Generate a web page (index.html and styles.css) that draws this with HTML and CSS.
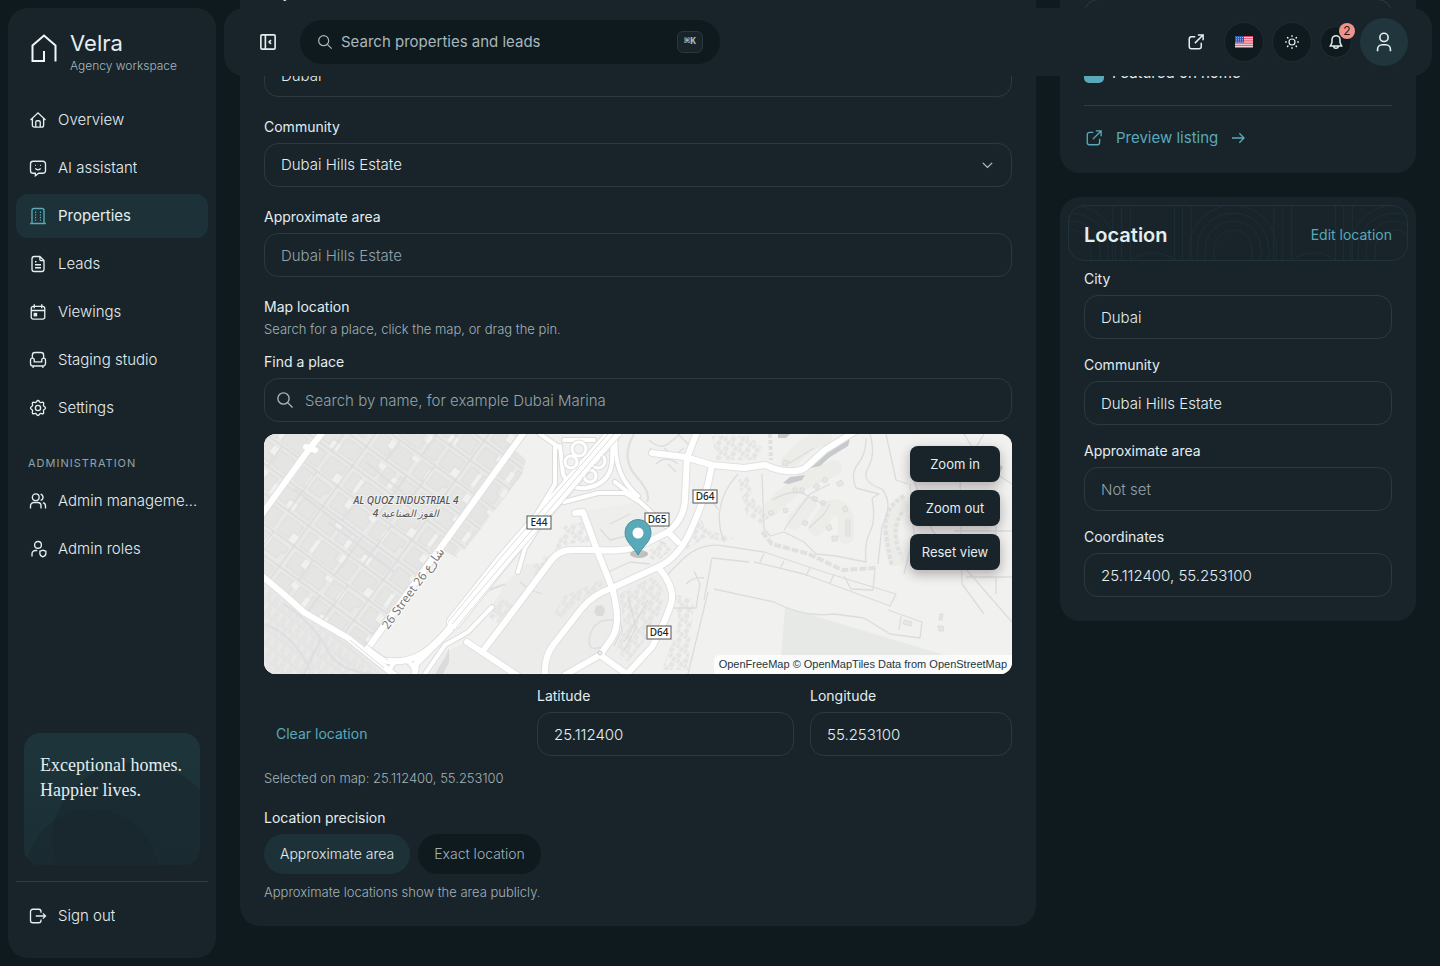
FILE: index.html
```html
<!DOCTYPE html>
<html lang="en">
<head>
<meta charset="utf-8">
<meta name="viewport" content="width=device-width, initial-scale=1">
<title>Velra – Property location</title>
<link rel="stylesheet" href="styles.css">
</head>
<body>
<div class="shell">
  <aside class="sidebar">
    <div class="brand">
      <svg class="brand-mark" viewBox="0 0 28 30" aria-hidden="true"><path d="M14 18v10H2.500V12.500L14 2.500l11.500 10V28.500"/></svg>
      <div class="brand-text">
        <span class="brand-name">Velra</span>
        <span class="brand-sub">Agency workspace</span>
      </div>
    </div>
    <nav class="nav">
      <a class="nav-item" href="#"><svg class="icon" viewBox="0 0 24 24"><path d="M2 12 12 2.500 22 12M4.500 9.800V19a2.500 2.500 0 0 0 2.500 2.500h10a2.500 2.500 0 0 0 2.500-2.500V9.800M9 21v-6a2 2 0 0 1 2-2h2a2 2 0 0 1 2 2v6"/></svg><span>Overview</span></a>
      <a class="nav-item" href="#"><svg class="icon" viewBox="0 0 24 24"><path d="M5.500 3h13A3.500 3.500 0 0 1 22 6.500v9a3.500 3.500 0 0 1-3.500 3.500H13l-4.500 3.300V19h-3A3.500 3.500 0 0 1 2 15.500v-9A3.500 3.500 0 0 1 5.500 3zM8 8.500h1M15 8.500h1M8.500 12.500c1.500 2.600 5.500 2.600 7 0"/></svg><span>AI assistant</span></a>
      <a class="nav-item is-active" href="#" aria-current="page"><svg class="icon" viewBox="0 0 24 24"><path d="M1.500 22h21M4 22V4.500A2.500 2.500 0 0 1 6.500 2h11A2.500 2.500 0 0 1 20 4.500V22M8 7h1.500M14.500 7H16M8 10.500h1.500M14.500 10.500H16M8 14h1.500M14.500 14H16M8 17.500h1.500M14.500 17.500H16"/></svg><span>Properties</span></a>
      <a class="nav-item" href="#"><svg class="icon" viewBox="0 0 24 24"><path d="M14.500 2H7a3 3 0 0 0-3 3v14a3 3 0 0 0 3 3h10a3 3 0 0 0 3-3V7.500zM14.500 2v3.500a2 2 0 0 0 2 2H20M8 9h2M8 13h8M8 17h8"/></svg><span>Leads</span></a>
      <a class="nav-item" href="#"><svg class="icon" viewBox="0 0 24 24"><path d="M5.500 4.500h13A2.500 2.500 0 0 1 21 7v12a2.500 2.500 0 0 1-2.500 2.500h-13A2.500 2.500 0 0 1 3 19V7a2.500 2.500 0 0 1 2.500-2.500zM3 10h18M7 1.500V7M17 1.500V7"/><rect x="7" y="14" width="3" height="3" fill="currentColor"/></svg><span>Viewings</span></a>
      <a class="nav-item" href="#"><svg class="icon" viewBox="0 0 24 24"><path d="M4.500 9V5.500A3.500 3.500 0 0 1 8 2h8a3.500 3.500 0 0 1 3.500 3.500V9M7 14.500V12a2.500 2.500 0 1 0-5 0v4.500A3.500 3.500 0 0 0 5.500 20h13a3.500 3.500 0 0 0 3.500-3.500V12a2.500 2.500 0 1 0-5 0v2.500zM5.500 20v2.500M18.500 20v2.500"/></svg><span>Staging studio</span></a>
      <a class="nav-item" href="#"><svg class="icon" viewBox="0 0 24 24"><circle cx="12" cy="12" r="3.500"/><path d="M12 2c1.800 0 1.900 2.200 3.100 2.700S18 3.600 19.200 4.800s-.4 2.900.1 4.100S22 10.200 22 12s-2.200 1.900-2.700 3.100 1.100 2.900-.1 4.100-2.900-.4-4.100.1S13.800 22 12 22s-1.900-2.200-3.100-2.700-2.900 1.100-4.100-.1.400-2.900-.1-4.100S2 13.800 2 12s2.200-1.900 2.700-3.100-1.100-2.900.1-4.100 2.900.4 4.100-.1S10.200 2 12 2z"/></svg><span>Settings</span></a>
      <p class="nav-heading">ADMINISTRATION</p>
      <a class="nav-item" href="#"><svg class="icon" viewBox="0 0 24 24"><circle cx="9" cy="7" r="4.500"/><path d="M2 22v-3.500A4.500 4.500 0 0 1 6.500 14h5a4.500 4.500 0 0 1 4.500 4.500V22M15.500 2.700a4.500 4.500 0 0 1 0 8.600M18.500 14.200A4.500 4.500 0 0 1 22 18.500V22"/></svg><span>Admin manageme…</span></a>
      <a class="nav-item" href="#"><svg class="icon" viewBox="0 0 24 24"><circle cx="12" cy="6.500" r="4.500"/><path d="M4 22v-3.500A4.500 4.500 0 0 1 8.500 14H11M18.500 13.500l4 1.500v3c0 2.500-2 3.800-4 4.500-2-.7-4-2-4-4.500v-3z"/></svg><span>Admin roles</span></a>
    </nav>
    <div class="promo">
      <svg class="promo-art" viewBox="0 0 176 132" preserveAspectRatio="xMidYMid slice" aria-hidden="true"><ellipse cx="112" cy="106" rx="84" ry="76"/><circle cx="68" cy="143" r="67"/></svg>
      <p class="promo-text">Exceptional homes.<br>Happier lives.</p>
    </div>
    <div class="sidebar-foot">
      <button class="nav-item" type="button"><svg class="icon" viewBox="0 0 24 24"><path d="M16 7.500V6a3 3 0 0 0-3-3H5a3 3 0 0 0-3 3v12a3 3 0 0 0 3 3h8a3 3 0 0 0 3-3v-1.500M9 12h13M18.500 8.500 22 12l-3.500 3.500"/></svg><span>Sign out</span></button>
    </div>
  </aside>

  <header class="topbar">
    <button class="icon-btn plain" type="button" aria-label="Collapse sidebar"><svg class="icon" viewBox="0 0 24 24"><path stroke-width="2.200" d="M4 2.500h16A1.500 1.500 0 0 1 21.500 4v16a1.500 1.500 0 0 1-1.500 1.500H4A1.500 1.500 0 0 1 2.500 20V4A1.500 1.500 0 0 1 4 2.500zM8.500 2.500v19M16 9.500 13.500 12l2.500 2.500"/></svg></button>
    <label class="search">
      <svg class="icon icon-sm" viewBox="0 0 24 24"><circle cx="10" cy="10" r="7.500"/><path d="m15.500 15.500 6.500 6.500"/></svg>
      <input class="search-input" type="search" aria-label="Search properties and leads" placeholder="Search properties and leads">
      <kbd class="kbd">⌘K</kbd>
    </label>
    <div class="actions">
      <a class="icon-btn plain" href="#" aria-label="Open site"><svg class="icon" viewBox="0 0 24 24"><path stroke-width="2" d="M11 5H6a3 3 0 0 0-3 3v10a3 3 0 0 0 3 3h10a3 3 0 0 0 3-3v-5M10.500 13.500 21 3M14.500 2.500H21.500V9.500"/></svg></a>
      <button class="icon-btn round" type="button" aria-label="Language: English">
        <svg class="flag" viewBox="0 0 18 12"><rect width="18" height="12" fill="#f4f5f7"/><path d="M0 .5h18M0 2.300h18M0 4.200h18M0 6h18M0 7.800h18M0 9.700h18M0 11.500h18" stroke="#e5405c"/><rect width="9" height="6.500" fill="#3157b5"/><path d="M1 1.500h8M1 3.300h8M1 5.100h8" stroke="#dfe6f6" stroke-width=".6" stroke-dasharray="1 1"/></svg>
      </button>
      <button class="icon-btn round" type="button" aria-label="Theme"><svg class="icon icon-sm" viewBox="0 0 24 24"><circle cx="12" cy="12" r="4.500"/><path stroke-linecap="round" stroke-width="2.200" d="M12 2.500v.8M12 20.700v.8M2.500 12h.8M20.700 12h.8M5.300 5.300l.5.500M18.200 18.200l.5.500M5.300 18.700l.5-.5M18.200 5.800l.5-.5"/></svg></button>
      <button class="icon-btn round small" type="button" aria-label="Notifications, 2 unread"><svg class="icon icon-sm" viewBox="0 0 24 24"><path stroke-width="2.200" d="M12 2.500a6 6 0 0 0-6 6V13l-2.500 5h17L18 13V8.500a6 6 0 0 0-6-6zM8.500 18c0 4.500 7 4.500 7 0"/></svg><span class="badge">2</span></button>
      <button class="icon-btn avatar" type="button" aria-label="Account"><svg class="icon icon-lg" viewBox="0 0 24 24"><circle cx="12" cy="7" r="4.500"/><path d="M5 22v-2a5 5 0 0 1 5-5h4a5 5 0 0 1 5 5v2"/></svg></button>
    </div>
  </header>

  <main class="content">
    <form class="card form-card">
      <p class="label">City</p>
      <div class="field gap-top">
        <label class="label" for="f-city">City</label>
        <input class="input" id="f-city" value="Dubai">
      </div>
      <div class="field">
        <label class="label" for="f-comm">Community</label>
        <div class="select-wrap">
          <select class="input" id="f-comm"><option>Dubai Hills Estate</option></select>
          <svg class="icon icon-sm chevron" viewBox="0 0 24 24"><path d="m4.500 8.500 7.500 7.500 7.500-7.500"/></svg>
        </div>
      </div>
      <div class="field">
        <label class="label" for="f-area">Approximate area</label>
        <input class="input" id="f-area" placeholder="Dubai Hills Estate">
      </div>
      <section class="map-section">
        <h3 class="label">Map location</h3>
        <p class="help">Search for a place, click the map, or drag the pin.</p>
        <div class="field find">
          <label class="label" for="f-find">Find a place</label>
          <div class="select-wrap">
            <svg class="icon lens" viewBox="0 0 24 24"><circle cx="10" cy="10" r="7.500"/><path d="m15.500 15.500 6.500 6.500"/></svg>
            <input class="input with-icon" id="f-find" placeholder="Search by name, for example Dubai Marina">
          </div>
        </div>
        <div class="map">
          <svg class="map-art" viewBox="0 0 748 240" preserveAspectRatio="xMidYMid slice" role="img" aria-label="Map of Al Quoz and Dubai Hills">
            <defs>
              <pattern id="blocks" width="92" height="74" patternUnits="userSpaceOnUse" patternTransform="rotate(36)">
                <rect width="92" height="74" fill="#e9eae8"/>
                <g fill="#e5e6e3" stroke="#d9dada" stroke-width=".7">
                  <path d="M3 3h12v9h5v8H3zM24 3h17v5h4v12H24zM51 3h12v17H51zM68 4h19v7h-4v8H68zM3 28h15v6h4v10H3zM27 28h11v16H27zM43 28h21v9h-5v7H43zM70 28h17v16H70zM3 52h10v18H3zM18 52h21v8h4v10H18zM49 52h13v18H49zM67 52h20v10h-6v8H67z"/>
                </g>
                <g fill="#f1f1f0"><path d="M15 3h6v8h-6zM42 3h7v4h-7zM63 5h4v12h-4zM19 28h7v5h-7zM38 33h5v11h-5zM60 38h9v7h-9zM13 54h4v14h-4zM43 51h6v8h-6zM82 63h8v8h-8z"/></g>
                <path d="M0 24h92M0 48h92M0 73h92M22 0v24M48 24v50M65 0v48M90 0v74" fill="none" stroke="#dcdcde" stroke-width="1.500"/>
              </pattern>
              <pattern id="houses" width="12" height="9" patternUnits="userSpaceOnUse" patternTransform="rotate(-52)">
                <path d="M1 1h4v3H1zM7 2h4v4H7zM2 6h4v2H2z" fill="#e6e7e5" stroke="#dadbda" stroke-width=".5"/>
              </pattern>
            </defs>
            <rect width="748" height="240" fill="#f1f1f0"/>
            <path fill="url(#blocks)" d="M0 0H261L200 85L104 214L84 204L41 179L0 144z"/>
            <path fill="#e9eae8" d="M0 146L41 181L84 206L128 240H0z"/>
            <path fill="url(#houses)" d="M0 150L41 184L84 210L116 240H0z"/>
            <path fill="url(#blocks)" d="M251 16L262 26L258 40L216 96L194 124L178 116z"/>
            <path fill="#ececea" d="M228 172L241 150L262 130L284 128L241 188L218 218L203 208L181 218L166 240H251L218 218L241 188L291 124L308 116H331L348 154L353 181L348 204L336 221L301 239H251z"/>
            <path fill="#ececea" d="M241 188L291 124L308 116H331L348 154L353 181L348 204L336 221L301 239H251L218 218z"/>
            <path fill="#eeeeec" d="M348 154L394 133L408 154L406 178L388 213L364 239L336 221L348 204L353 181zM311 79L374 68L404 98L374 114L333 116z"/>
            <path fill="url(#houses)" d="M355 160L390 142L400 158L397 176L380 208L364 228L352 216L360 190zM300 92L318 88L326 108L305 110L290 118zM268 134L282 120L292 124L274 148zM412 160L430 166L424 236H398L414 190zM300 162L336 146L340 152L310 170L298 184L290 180zM380 120L398 108L408 116L392 128zM448 2H486L498 14L492 26H452zM474 46L484 42L490 66L506 84L496 90L482 80zM436 84L444 96L470 104L464 108L440 104L420 118L416 112zM222 180L240 164L250 172L232 190z"/>
            <path fill="#e6e9e6" d="M521 173L690 224L700 240H516z"/>
            <g fill="none" stroke="#ecede9" stroke-width="16" stroke-linecap="round"><path d="M524 30Q540 8 560 4M508 74L518 64L535 50L570 34M530 88L545 70M552 94L565 75Q584 66 582 102M632 124Q620 90 636 72"/></g>
            <g fill="#e6e7e5" stroke="#d6d7d7" stroke-width=".7"><path d="M520 26l5 1-2 5-4-1zM529 54h4v5h-4zM536 54h4v5h-4zM504 78l4-2 2 4-4 2zM519 75l4-1 1 4-4 1zM540 86l4 2-2 4-4-2zM552 49l4 3-3 4-4-3zM560 43l4 2-2 4-4-2zM572 49l5-3 3 4-5 3zM549 62l5 2-2 4-4-2zM558 66l4 2-2 4-4-2zM562 93l4-3 2 5-4 2zM568 102l6 0-1 5-5 0zM578 74l4-2 2 5-4 1zM582 86h4v16h-4zM676 180l3 0-1 6-3 0zM674 192l5 0 1 5-5 0zM640 186l8 2-1 4-8-2z"/></g>
            <path fill="none" stroke="#e0e1df" stroke-width="4" stroke-dasharray="7 2" d="M498 98L508 110L545 120L578 136L612 134"/>
            <path fill="none" stroke="#e0e1df" stroke-width="4" stroke-dasharray="4 2" d="M506 0L507 26M640 62Q618 74 622 100T628 132M638 78Q626 96 636 120"/>
            <g fill="none" stroke="#dcdcde" stroke-width="1.300" stroke-linejoin="round">
              <path d="M498 40L500 95L506 102L520 98L540 108L552 120L572 122L602 128Q600 110 606 98T608 64L615 60L592 54Q586 40 594 30T602 4M606 0Q612 20 604 34T618 55Q630 70 618 92L614 130M622 0L632 46L644 50"/>
              <path d="M400 144L420 124Q438 108 460 112L500 118L560 138L612 154L632 160L626 172L540 140L490 128M440 166L448 124L485 128M450 155L510 168Q540 184 570 180L600 184L626 200L656 204L658 188L624 176M444 158L424 240"/>
              <path d="M430 137L436 150L432 174H410M635 196L637 182M422 150Q430 142 440 144"/>
              <path d="M450 30Q440 60 454 75M474 40Q446 70 460 108M580 142L587 155L609 156L611 134M640 140L650 100L646 50M668 96L748 188M648 40L668 96M700 0Q720 34 748 50M720 0L696 40L698 150L720 180M690 97H748M702 143H748M732 92V130M732 143V160"/>
              <path d="M508 66Q530 54 540 60T560 70M520 96L534 76L546 60L566 50M524 30L550 14M545 94L560 80L566 70M500 120L496 128M520 127L516 135M546 134L542 142M570 140L566 149M256 148L266 156L278 160M336 95L346 106L362 102M346 90L366 80M340 140L366 128L386 130M376 94L388 104L402 110M352 160L358 196L350 212M364 162L372 194L360 216M360 208L384 166"/>
              <path d="M350 186Q330 184 326 202T340 212M414 0L430 16M385 6Q396 16 404 10L416 0M392 30Q402 20 414 30M386 14L396 24M400 14L410 22L420 14M404 30L412 38"/>
            </g>
            <g fill="none" stroke="#dedfe0" stroke-width="2.200"><path d="M370 0Q356 24 372 42T383 68M20 170Q50 190 62 214T110 240M40 240L56 206M0 190Q30 200 46 236M200 178L220 158L241 150M64 88L130 138M102 28L150 68M30 55L92 102"/></g>
            <path fill="#c6cacc" d="M543 35L550 25L562 18L570 12L586 5L584 12L566 23L556 32zM519 49L526 43L541 41L538 46L525 50zM514 0h12l-4 4h-8zM735 30l4 3-3 6z"/>
            <path fill="#d9dcdb" d="M332 172l6-1 3 5-2 6-6 0-3-4zM182 222l3-8 0 14-6 12h-8z"/>
            <g fill="none" stroke="#e0e0e1" stroke-linejoin="round" stroke-linecap="round">
              <path stroke-width="16" d="M351 -2L241 124L190 188"/>
              <path stroke-width="8" d="M192 186Q170 214 154 222T118 226L104 216M186 196L152 230L150 244"/>
              <path stroke-width="8" d="M261 -3L104 214M59 -2L46 14L-2 80M-2 142L16 157L41 179L84 204L118 231L134 244M218 218L254 242M203 208L218 218L241 188L286 128Q294 116 308 116L331 116Q360 118 376 112L404 98Q421 84 421 64L423 24L433 -2M404 98L414 108"/>
              <path stroke-width="8" d="M311 79L319 78L333 116L348 154Q358 188 348 204L336 221L301 241M336 221L364 241M281 241Q280 222 290 210L318 174Q330 160 348 154L394 133Q414 124 426 98T444 50L448 31M394 133Q412 154 407 170T388 213L362 241M388 19L421 23L448 31L480 34L501 31Q526 42 541 34L561 16L590 -2"/>
            </g>
            <g fill="none" stroke="#dcdcdd" stroke-width="6" stroke-linecap="round">
              <path d="M296 12L299 40Q306 56 322 54Q346 50 348 28L349 -2M291 11L291 50L274 78M351 48L374 66L402 92M300 68L334 59L361 59L376 68M278 88L261 114L254 138M228 173L204 198L181 211L161 240"/>
              <circle cx="138" cy="238" r="12"/>
              <path d="M276 0L296 14M352 2Q348 40 374 62M300 6H330"/>
            </g>
            <g fill="none" stroke="#fff" stroke-linejoin="round" stroke-linecap="round">
              <path stroke-width="14" d="M351 -2L241 124L190 188"/>
              <path stroke-width="6" d="M192 186Q170 214 154 222T118 226L104 216M186 196L152 230L150 244"/>
              <path stroke-width="6" d="M261 -3L104 214M59 -2L46 14L-2 80M42 13l9 3"/>
              <path stroke-width="6" d="M-2 142L16 157L41 179L84 204L118 231L134 244M203 208L218 218L254 242M218 218L241 188L286 128Q294 116 308 116L331 116Q360 118 376 112L404 98Q421 84 421 64L423 24L433 -2M404 98L414 108"/>
              <path stroke-width="6" d="M311 79L319 78L333 116L348 154Q358 188 348 204L336 221L301 241M336 221L364 241M281 241Q280 222 290 210L318 174Q330 160 348 154L394 133Q414 124 426 98T444 50L448 31M394 133Q412 154 407 170T388 213L362 241M388 19L421 23L448 31L480 34L501 31Q526 42 541 34L561 16L590 -2"/>
            </g>
            <g fill="none" stroke="#fff" stroke-width="4" stroke-linecap="round">
              <path d="M296 12L299 40Q306 56 322 54Q346 50 348 28L349 -2M291 11L291 50L274 78M351 48L374 66L402 92M300 68L334 59L361 59L376 68M278 88L261 114L254 138M228 173L204 198L181 211L161 240"/>
              <circle cx="138" cy="238" r="12"/>
              <path d="M276 0L296 14M352 2Q348 40 374 62M300 6H330"/>
            </g>
            <g fill="none" stroke="#dedede" stroke-width="5"><circle cx="315" cy="15" r="7"/><circle cx="334" cy="27" r="7"/><circle cx="307" cy="28" r="6"/><circle cx="326" cy="42" r="6"/></g>
            <g fill="none" stroke="#fff" stroke-width="3"><circle cx="315" cy="15" r="7"/><circle cx="334" cy="27" r="7"/><circle cx="307" cy="28" r="6"/><circle cx="326" cy="42" r="6"/></g>
            <path stroke="#fff" stroke-width="9" d="M343 8L296 62"/>
            <g fill="none" stroke="#dcdcdd" stroke-width="1"><path d="M344 0L238 122L184 188M356 2L250 124L192 194M350 0L244 124L188 190M86 206L120 234M92 202L124 226"/></g>
            <circle cx="336" cy="219" r="2" fill="#f1f1f0" stroke="#ccc"/>
            <g class="place">
              <text x="142" y="70" text-anchor="middle">AL QUOZ INDUSTRIAL 4</text>
              <text x="142" y="83" text-anchor="middle" direction="rtl">القوز الصناعية 4</text>
            </g>
            <text class="street" transform="translate(124 196) rotate(-54)">26 Street 26 شارع</text>
            <g class="shield">
              <rect x="263" y="82" width="24" height="13"/><text x="275" y="92">E44</text>
              <rect x="429" y="56" width="24" height="13"/><text x="441" y="66">D64</text>
              <rect x="381" y="79" width="24" height="13"/><text x="393" y="89">D65</text>
              <rect x="383" y="192" width="24" height="13"/><text x="395" y="202">D64</text>
            </g>
            <ellipse cx="375" cy="120" rx="9" ry="4" fill="#000" opacity=".2"/>
            <path d="M374 121C370 113 361 108 361 98.500a13 13 0 0 1 26 0C387 108 378 113 374 121z" fill="#5aa9b8" stroke="#4793a2"/>
            <circle cx="374" cy="99" r="5.500" fill="#fff"/>
          </svg>
          <div class="map-controls">
            <button class="map-btn" type="button">Zoom in</button>
            <button class="map-btn" type="button">Zoom out</button>
            <button class="map-btn" type="button">Reset view</button>
          </div>
          <p class="map-credit"><a href="#">OpenFreeMap</a> <a href="#">© OpenMapTiles</a> Data from <a href="#">OpenStreetMap</a></p>
        </div>
        <div class="coords">
          <button class="text-btn" type="button">Clear location</button>
          <div class="field"><label class="label" for="f-lat">Latitude</label><input class="input" id="f-lat" value="25.112400"></div>
          <div class="field"><label class="label" for="f-lng">Longitude</label><input class="input" id="f-lng" value="55.253100"></div>
        </div>
        <p class="help spaced">Selected on map: 25.112400, 55.253100</p>
      </section>
      <section class="precision">
        <h3 class="label">Location precision</h3>
        <div class="chips">
          <button class="chip is-on" type="button" aria-pressed="true">Approximate area</button>
          <button class="chip" type="button" aria-pressed="false">Exact location</button>
        </div>
        <p class="help">Approximate locations show the area publicly.</p>
      </section>
    </form>

    <div class="side">
      <section class="card publish-card">
        <input class="input" aria-label="Status">
        <label class="check"><input class="check-box" type="checkbox" checked><span>Featured on home</span></label>
        <a class="preview" href="#">
          <svg class="icon" viewBox="0 0 24 24"><path d="M11 4.500H6a3 3 0 0 0-3 3V18a3 3 0 0 0 3 3h10.500a3 3 0 0 0 3-3v-5M10.500 13.500 21 3M14.500 2.500H21.500V9.500"/></svg>
          <span>Preview listing</span>
          <svg class="icon icon-sm" viewBox="0 0 24 24"><path stroke-width="2" d="M3 12h18M14 5l7 7-7 7"/></svg>
        </a>
      </section>
      <section class="card location-card">
        <div class="location-head">
          <svg class="arches" viewBox="0 0 340 56" preserveAspectRatio="xMidYMid slice" aria-hidden="true">
            <defs>
              <g id="arch"><path d="M-44 56V44a44 44 0 0 1 88 0v12M-36 56V44a36 36 0 0 1 72 0v12M-28 56V44a28 28 0 0 1 56 0v12M-19 56V44a19 19 0 0 1 38 0v12"/></g>
              <g id="bars"><path d="M-40 0v56M-31 0v56M-22 0v56M22 0v56M30 0v56M39 0v56M-24 56q24-16 48 0"/></g>
            </defs>
            <use href="#arch" x="3"/><use href="#bars" x="84"/><use href="#arch" x="165"/><use href="#bars" x="246"/><use href="#arch" x="327"/>
          </svg>
          <h2 class="location-title">Location</h2>
          <a class="edit-link" href="#">Edit location</a>
        </div>
        <div class="side-fields">
          <div class="field"><label class="label" for="s-city">City</label><input class="input" id="s-city" value="Dubai" readonly></div>
          <div class="field"><label class="label" for="s-comm">Community</label><input class="input" id="s-comm" value="Dubai Hills Estate" readonly></div>
          <div class="field"><label class="label" for="s-area">Approximate area</label><input class="input" id="s-area" placeholder="Not set" readonly></div>
          <div class="field"><label class="label" for="s-coord">Coordinates</label><input class="input" id="s-coord" value="25.112400, 55.253100" readonly></div>
        </div>
      </section>
    </div>
  </main>
</div>
</body>
</html>
```

FILE: styles.css
```css
:root {
  --page: #0f1a1f;
  --panel: #18242a;
  --active: #1c3238;
  --line: #2b3a40;
  --text: #e4edf0;
  --muted: #93a3a9;
  --teal: #5aa9b8;
}

* { box-sizing: border-box; }

body {
  margin: 0;
  background: var(--page);
  color: var(--text);
  font: 400 15px/20px Inter, "Noto Sans", sans-serif;
}

p, h2, h3 { margin: 0; }
a { color: inherit; text-decoration: none; }
button, input, select { font: inherit; color: inherit; }
button { border: 0; background: none; cursor: pointer; }

.shell {
  display: grid;
  grid-template-columns: 208px minmax(0, 1fr);
  gap: 24px;
  padding: 0 24px 0 8px;
}

.icon {
  flex: none;
  width: 18px;
  height: 18px;
  fill: none;
  stroke: currentColor;
  stroke-width: 1.8;
}
.icon-sm { width: 16px; height: 16px; }
.icon-lg { width: 22px; height: 22px; }

/* Sidebar */
.sidebar {
  position: sticky;
  top: 8px;
  height: calc(100vh - 16px);
  margin: 8px 0;
  padding: 21px 8px 20px;
  display: flex;
  flex-direction: column;
  background: var(--panel);
  border-radius: 20px;
}
.brand { display: flex; gap: 12px; padding: 0 14px; margin-bottom: 23px; }
.brand-mark { width: 28px; height: 30px; margin-top: 4px; fill: none; stroke: #f2f6f7; stroke-width: 2; }
.brand-text { display: flex; flex-direction: column; }
.brand-name { font-size: 22px; line-height: 28px; }
.brand-sub { font-size: 12px; line-height: 18px; font-weight: 300; color: #a9b7bc; }
.nav { display: flex; flex-direction: column; gap: 4px; }
.nav-item {
  display: flex;
  align-items: center;
  gap: 11px;
  width: 100%;
  height: 44px;
  padding: 0 8px 0 13px;
  border-radius: 12px;
  font-weight: 300;
  text-align: left;
}
.nav-item span { overflow: hidden; text-overflow: ellipsis; white-space: nowrap; }
.nav-item.is-active { background: var(--active); font-weight: 400; }
.nav-item.is-active .icon { color: var(--teal); }
.nav-heading {
  padding: 19px 12px 2px;
  font-size: 11px;
  line-height: 20px;
  letter-spacing: 1px;
  color: var(--muted);
}
.promo {
  position: relative;
  height: 132px;
  margin: auto 8px 16px;
  padding: 20px 0 0 16px;
  overflow: hidden;
  border-radius: 16px;
  background: linear-gradient(#1d353a, #1b2f35);
}
.promo-art { position: absolute; inset: 0; width: 100%; height: 100%; fill: #18262c; fill-opacity: .5; }
.promo-text { position: relative; font: 400 18px/25px "Liberation Serif", serif; white-space: nowrap; }
.sidebar-foot { border-top: 1px solid #2a3f47; padding-top: 12px; }

/* Top bar */
.topbar {
  position: fixed;
  z-index: 2;
  top: 8px;
  left: 224px;
  right: 8px;
  height: 68px;
  padding: 0 24px;
  display: flex;
  align-items: center;
  gap: 12px;
  background: var(--panel);
  border-radius: 20px;
}
.icon-btn {
  position: relative;
  flex: none;
  display: grid;
  place-items: center;
  width: 40px;
  height: 40px;
  padding: 0;
  border-radius: 50%;
}
.round { background: var(--page); border: 1px solid #1f2d33; }
.small { width: 32px; height: 32px; }
.avatar { width: 48px; height: 48px; background: #21353c; }
.flag { width: 18px; height: 12px; }
.badge {
  position: absolute;
  top: -4px;
  right: -4px;
  width: 16px;
  height: 16px;
  border-radius: 50%;
  background: #ee948b;
  color: #26181a;
  font-size: 12px;
  line-height: 16px;
  text-align: center;
}
.search {
  display: flex;
  align-items: center;
  gap: 8px;
  flex: 0 1 420px;
  height: 44px;
  padding: 0 17px;
  border-radius: 22px;
  background: var(--page);
  color: #a9b7bc;
}
.search-input {
  flex: 1;
  min-width: 0;
  padding: 0;
  border: 0;
  outline: 0;
  background: none;
}
.search-input::placeholder { color: #a9b7bc; }
.kbd {
  width: 26px;
  height: 22px;
  border: 1px solid #2a373d;
  border-radius: 6px;
  background: var(--panel);
  font: 700 10px/20px "Liberation Mono", "DejaVu Sans Mono", monospace;
  text-align: center;
}
.actions { display: flex; align-items: center; gap: 8px; margin-left: auto; }

/* Content is scrolled a little way below the top bar */
.content {
  display: grid;
  grid-template-columns: minmax(0, 1fr) 356px;
  gap: 24px;
  align-items: start;
  margin-top: -41px;
  padding-bottom: 40px;
}
.card { background: var(--panel); border-radius: 20px; }
.form-card { padding: 24px; display: flex; flex-direction: column; gap: 20px; }
.gap-top { margin-top: 4px; }
.field { display: flex; flex-direction: column; gap: 6px; min-width: 0; }
.label { font-size: 14px; line-height: 20px; font-weight: 400; }
.input {
  width: 100%;
  height: 44px;
  padding: 0 16px;
  border: 1px solid var(--line);
  border-radius: 14px;
  outline: 0;
  background: transparent;
  font-weight: 300;
  appearance: none;
}
.input::placeholder { color: var(--muted); opacity: 1; }
.select-wrap { position: relative; }
.chevron { position: absolute; right: 17px; top: 14px; width: 15px; pointer-events: none; color: #b9c6cb; }
.lens { position: absolute; left: 12px; top: 13px; color: #a9b7bc; }
.with-icon { padding-left: 40px; }
.help { font-size: 13px; line-height: 20px; font-weight: 300; color: #a3b2b8; }
.map-section .help { margin-top: 2px; }
.find { margin-top: 13px; }

/* Map */
.map {
  position: relative;
  height: 240px;
  margin-top: 12px;
  overflow: hidden;
  border-radius: 12px;
  background: #f1f1f0;
}
.map-art { display: block; width: 100%; height: 100%; }
.place text {
  font: italic 500 10px "Noto Sans", "DejaVu Sans", sans-serif;
  fill: #555;
  stroke: #f1f1f0;
  stroke-width: 2px;
  paint-order: stroke;
}
.street {
  font: 12px "Noto Sans", "DejaVu Sans", sans-serif;
  fill: #777;
  stroke: #fff;
  stroke-width: 2px;
  paint-order: stroke;
}
.shield rect { fill: #fff; stroke: #555; }
.shield text { font: 500 10px "Noto Sans", sans-serif; fill: #222; text-anchor: middle; }
.map-controls { position: absolute; top: 12px; right: 12px; display: grid; gap: 8px; }
.map-btn {
  width: 90px;
  height: 36px;
  padding: 0;
  border-radius: 8px;
  background: var(--panel);
  font-size: 13px;
  box-shadow: 0 4px 12px rgba(20, 10, 10, .3);
}
.map-credit {
  position: absolute;
  right: 0;
  bottom: 0;
  padding: 0 5px;
  border-top-left-radius: 6px;
  background: rgba(255, 255, 255, .75);
  color: #25363e;
  font: 11px/19px "Liberation Sans", sans-serif;
}
.coords {
  display: grid;
  grid-template-columns: 257fr 257fr 202fr;
  gap: 16px;
  align-items: end;
  margin-top: 12px;
}
.text-btn {
  justify-self: start;
  height: 44px;
  padding: 0 12px;
  color: var(--teal);
  font-size: 14px;
}
.map-section .spaced { margin-top: 12px; }
.chips { display: flex; gap: 8px; margin: 6px 0 8px; }
.chip {
  height: 40px;
  padding: 0 16px;
  border-radius: 20px;
  background: var(--page);
  color: #a3b2b8;
  font-size: 14px;
  font-weight: 300;
}
.chip.is-on { background: var(--active); color: var(--text); }

/* Right column */
.side { display: grid; gap: 24px; }
.publish-card { display: grid; padding: 40px 24px 23px; }
.check { display: flex; align-items: center; gap: 8px; height: 20px; margin: 20px 0 22px; }
.check-box {
  appearance: none;
  width: 20px;
  height: 20px;
  margin: 0;
  border-radius: 5px;
  background: var(--teal);
}
.preview {
  display: flex;
  align-items: center;
  gap: 12px;
  padding: 20px 0 0 1px;
  border-top: 1px solid #2e3d43;
  color: var(--teal);
  line-height: 24px;
}
.preview .icon:first-child { margin-right: 1px; }
.location-card { padding: 8px 8px 24px; }
.location-head {
  position: relative;
  display: flex;
  align-items: center;
  justify-content: space-between;
  height: 56px;
  padding: 4px 15px 0;
  border: 1px solid #20333a;
  border-radius: 16px;
  overflow: hidden;
}
.arches { position: absolute; inset: 0; width: 100%; height: 100%; fill: none; stroke: #1d2e34; }
.location-title { position: relative; font-size: 20px; line-height: 28px; font-weight: 600; }
.edit-link { position: relative; color: var(--teal); font-size: 14px; }
.side-fields { display: grid; gap: 16px; padding: 8px 16px 0; }
```
